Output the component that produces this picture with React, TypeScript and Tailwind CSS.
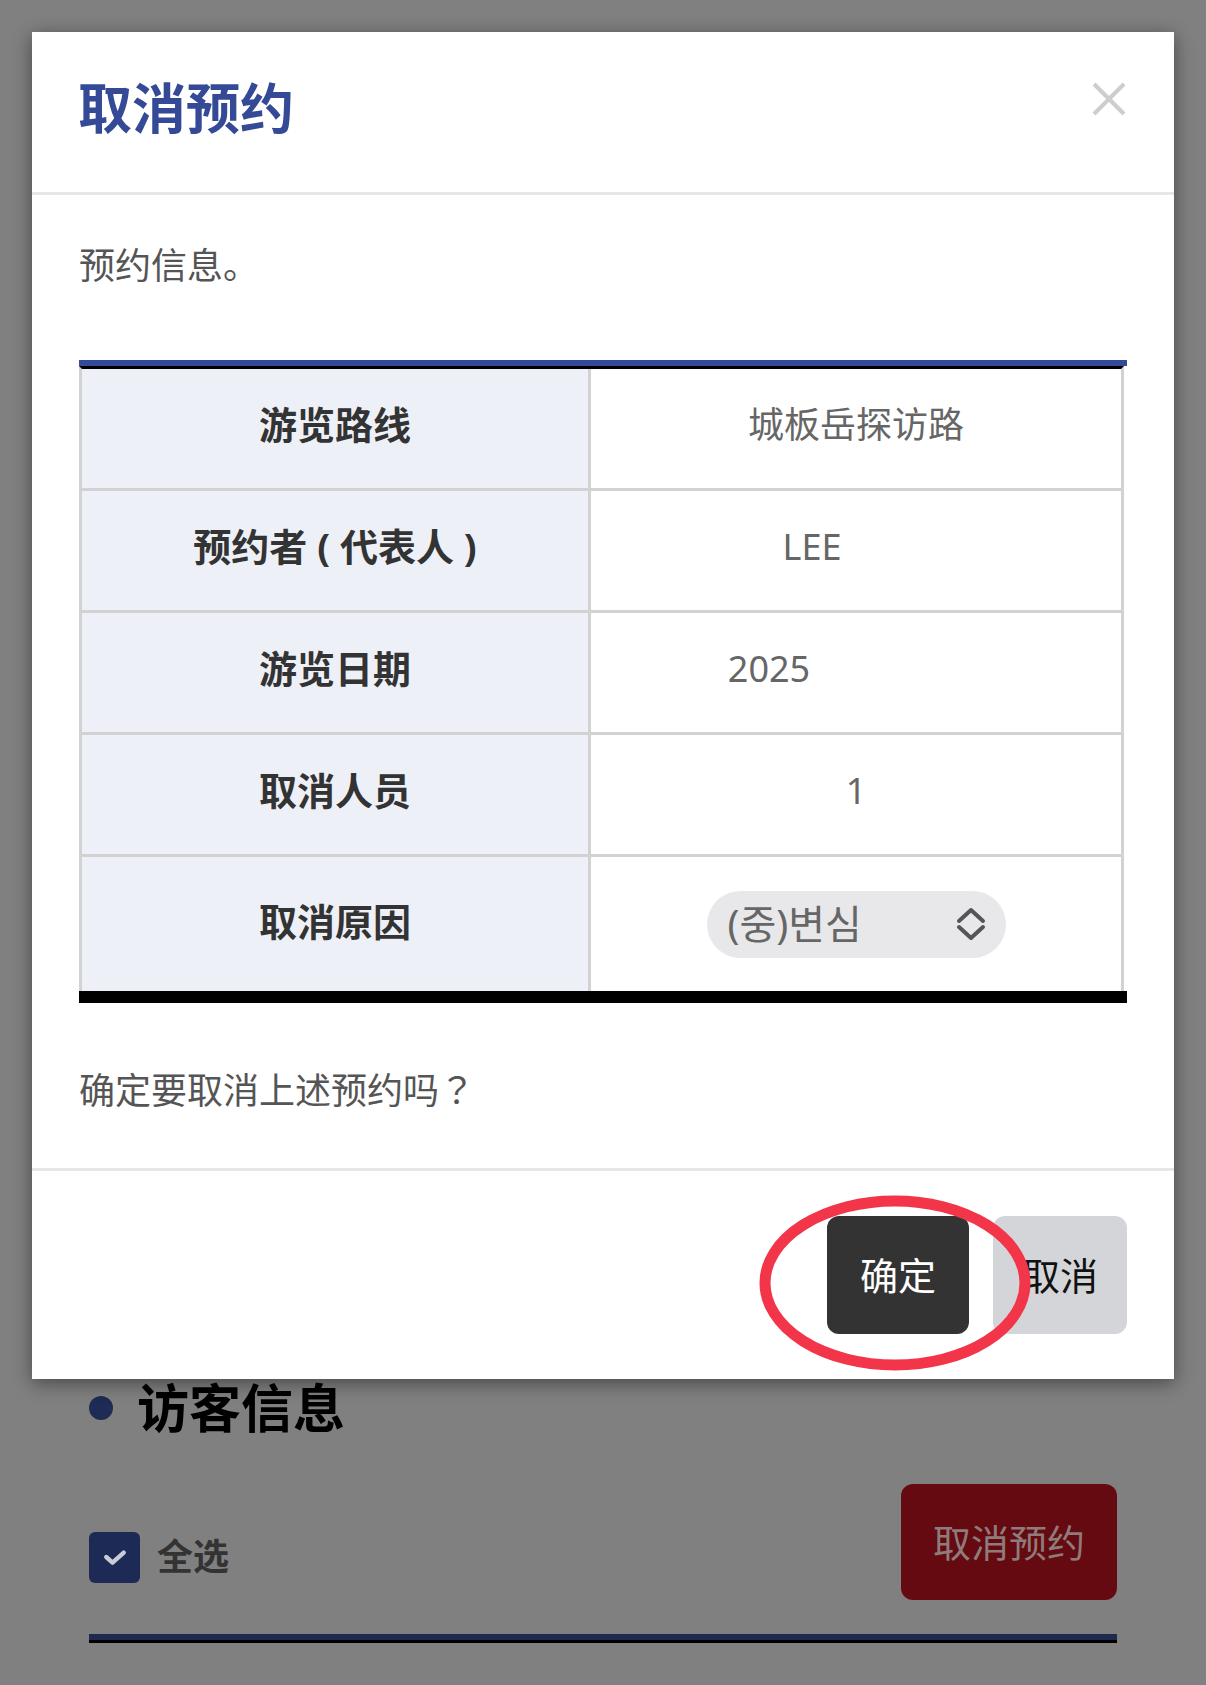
import React from 'react';

const font = "font-['Noto_Sans','Noto_Sans_CJK_SC','Noto_Sans_CJK_KR',sans-serif]";

interface Row {
    label: React.ReactNode;
    value: React.ReactNode;
    pad?: string;
}

const rows: Row[] = [
    { label: '游览路线', value: '城板岳探访路' },
    { label: '预约者 ( 代表人 )', value: 'LEE', pad: 'pr-[88px]' },
    { label: '游览日期', value: '2025', pad: 'pr-[174px]' },
    { label: '取消人员', value: '1' },
];

const CancelModal: React.FC = () => {
    return (
        <div className="absolute left-[32px] top-[32px] w-[1142px] bg-white shadow-[0_4px_18px_rgba(0,0,0,0.45)]">
            {/* header */}
            <div className="h-[163px] border-b-[3px] border-[#e6e6e6] flex items-start justify-between pl-[46px] pr-[48px] pt-[49px]">
                <h2 className="text-[54px] leading-none font-bold text-[#344a96]">取消预约</h2>
                <svg width="34" height="34" viewBox="0 0 34 34" className="mt-[1px]">
                    <line x1="2" y1="2" x2="32" y2="32" stroke="#cdcdcd" strokeWidth="4" />
                    <line x1="32" y1="2" x2="2" y2="32" stroke="#cdcdcd" strokeWidth="4" />
                </svg>
            </div>

            {/* body */}
            <div className="px-[47px] pt-[44px] pb-[50px]">
                <p className="text-[36px] leading-[54px] text-[#555]">预约信息。</p>

                <div className="mt-[67px] border-t-[6px] border-[#34499a]">
                    <div className="mr-[3px] border-t-[3px] border-black border-x-[3px] border-x-[#d2d2d2]">
                        {rows.map((r, i) => (
                            <div key={i} className="flex h-[122px] border-b-[3px] border-[#d2d2d2]">
                                <div className="w-[509px] shrink-0 bg-[#eef0f8] border-r-[3px] border-[#d2d2d2] flex items-center justify-center pb-[8px] text-[38px] font-bold text-[#333]">
                                    {r.label}
                                </div>
                                <div className={`flex-1 flex items-center justify-center pb-[8px] text-[36px] text-[#666] ${r.pad ?? ''}`}>
                                    {r.value}
                                </div>
                            </div>
                        ))}
                        <div className="flex h-[134px]">
                            <div className="w-[509px] shrink-0 bg-[#eef0f8] border-r-[3px] border-[#d2d2d2] flex items-center justify-center pb-[6px] text-[38px] font-bold text-[#333]">
                                取消原因
                            </div>
                            <div className="flex-1 flex items-center justify-center">
                                <div className="w-[299px] h-[67px] rounded-full bg-[#e8e8ea] flex items-center justify-between pl-[21px] pr-[20px]">
                                    <span className="text-[40px] leading-none text-[#666]">(중)변심</span>
                                    <svg width="30" height="34" viewBox="0 0 30 34" fill="none" stroke="#555" strokeWidth="4" strokeLinecap="round" strokeLinejoin="round">
                                        <path d="M3 14 15 3 27 14" />
                                        <path d="M3 20 15 31 27 20" />
                                    </svg>
                                </div>
                            </div>
                        </div>
                    </div>
                    <div className="h-[12px] bg-black" />
                </div>

                <p className="mt-[58px] text-[36px] leading-[54px] text-[#555]">
                    确定要取消上述预约吗<span className="font-['Noto_Sans_CJK_JP',sans-serif]">？</span>
                </p>
            </div>

            {/* footer */}
            <div className="border-t-[3px] border-[#e6e6e6] flex justify-end gap-[24px] px-[47px] pt-[45px] pb-[45px]">
                <button className="w-[142px] h-[118px] rounded-[12px] bg-[#333333] text-white text-[38px]">确定</button>
                <button className="w-[134px] h-[118px] rounded-[12px] bg-[#d4d5d8] text-[#111] text-[38px]">取消</button>
            </div>
        </div>
    );
};

const App: React.FC = () => {
    return (
        <div className={`relative h-[1685px] overflow-hidden bg-[#808080] ${font}`}>
            {/* page behind the overlay */}
            <div className="h-full flex flex-col justify-end px-[89px] pb-[42px]">
                <div className="flex items-center gap-[24px]">
                    <span className="w-[24px] h-[24px] rounded-full bg-[#1d2b55]" />
                    <span className="text-[52px] leading-[60px] font-bold text-black">访客信息</span>
                </div>
                <div className="mt-[46px] flex justify-between items-start">
                    <div className="flex items-center gap-[17px] pt-[46px]">
                        <span className="w-[51px] h-[51px] rounded-[6px] bg-[#1c2a55] flex items-center justify-center">
                            <svg width="30" height="30" viewBox="0 0 24 24" fill="none" stroke="#c8ccd6" strokeWidth="3.5" strokeLinecap="round" strokeLinejoin="round">
                                <path d="M5 12l5 4.5 9-8" />
                            </svg>
                        </span>
                        <span className="text-[36px] font-bold text-[#333]">全选</span>
                    </div>
                    <div className="w-[216px] h-[116px] rounded-[12px] bg-[#640a10] flex items-center justify-center text-[38px] text-[#8f7b7b]">
                        取消预约
                    </div>
                </div>
                <div className="mt-[34px] border-t-[6px] border-[#1f2a4f] border-b-[3px] border-b-black" />
            </div>

            <CancelModal />

            {/* red annotation */}
            <svg className="absolute left-[759px] top-[1195px]" width="272" height="176" viewBox="0 0 272 176">
                <ellipse cx="136" cy="88" rx="130" ry="82" fill="none" stroke="#f23548" strokeWidth="11" />
            </svg>
        </div>
    );
};

export default App;
